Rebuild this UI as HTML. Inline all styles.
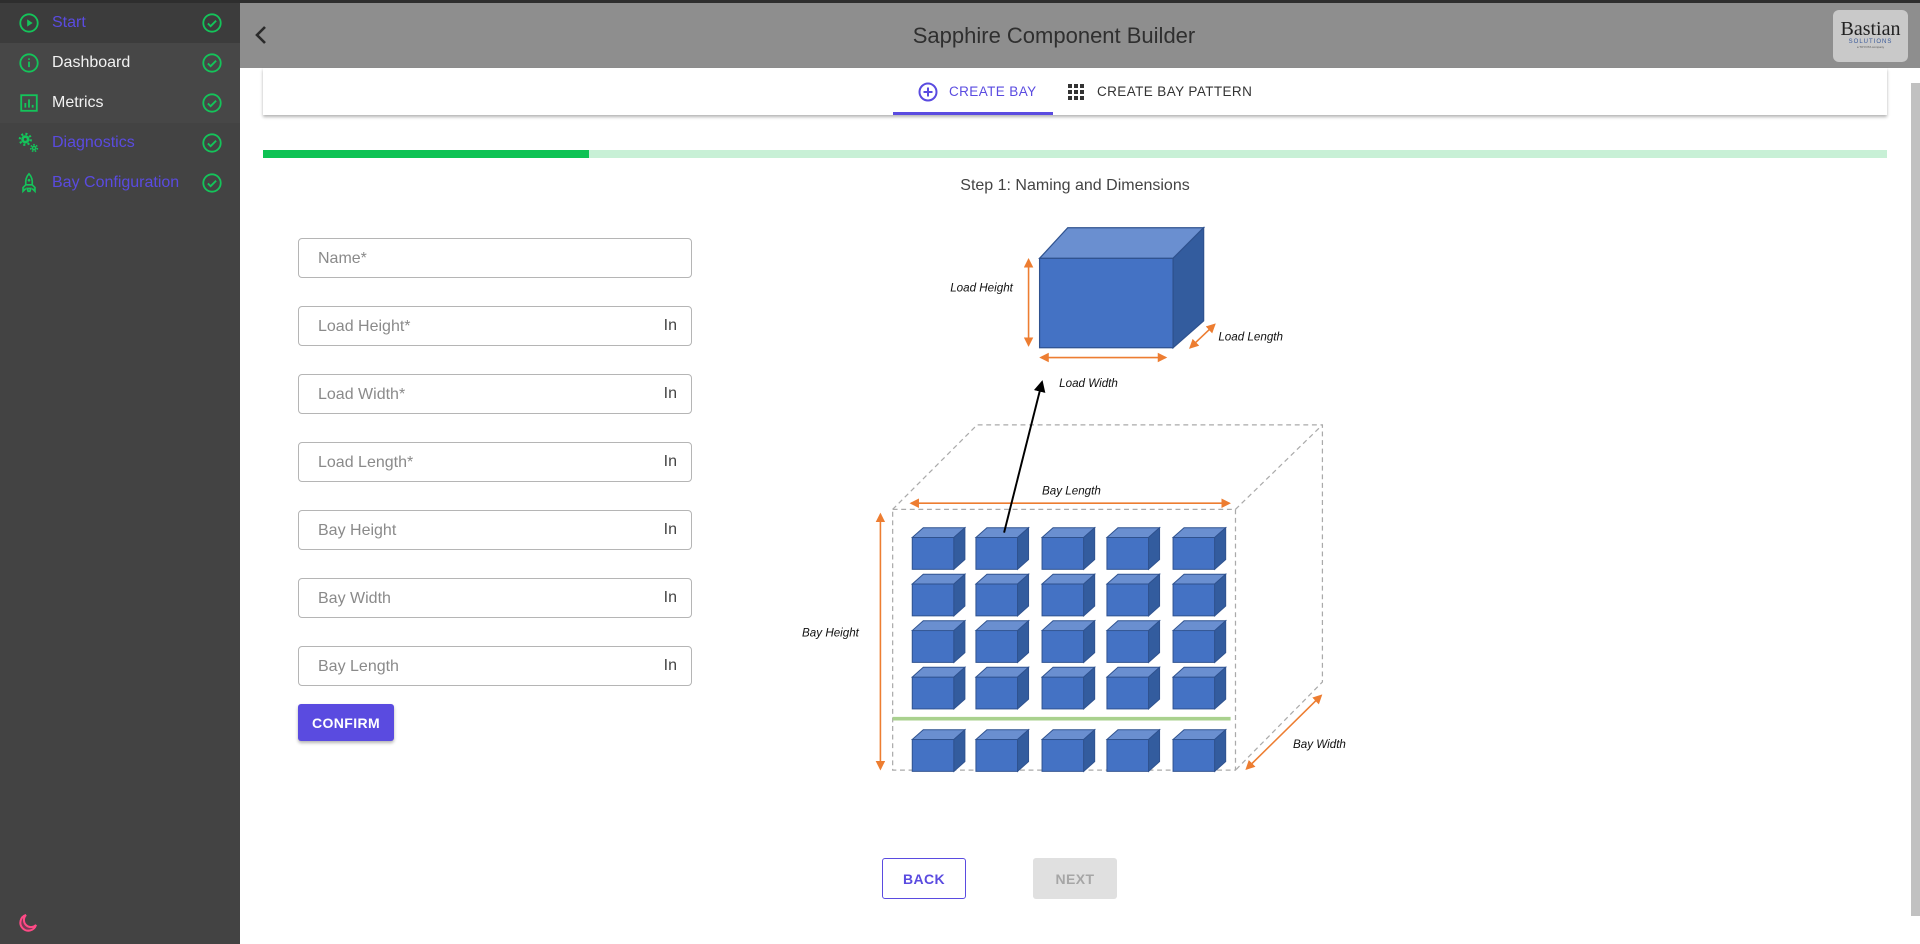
<!DOCTYPE html>
<html><head><meta charset="utf-8"><style>
*{margin:0;padding:0;box-sizing:border-box}
body{width:1920px;height:944px;overflow:hidden;background:#fff;font-family:"Liberation Sans",Roboto,sans-serif;position:relative}
.topline{position:absolute;left:0;top:0;width:1920px;height:3px;background:#2e2e2e}
.side{position:absolute;left:0;top:3px;width:240px;height:941px;background:#434343}
.item{position:absolute;left:0;width:240px;height:40px;display:flex;align-items:center}
.item .lbl{position:absolute;left:52px;font-size:16px}
.item svg.ic{position:absolute;left:18px}
.item svg.ck{position:absolute;left:201px}
.hdr{position:absolute;left:240px;top:3px;width:1680px;height:65px;background:#8e8e8e}
.title{position:absolute;left:0;width:100%;top:20px;text-align:center;font-size:22px;color:#2f2f2f;padding-right:52px}
.card{position:absolute;left:263px;top:68px;width:1624px;height:47px;background:#fff;box-shadow:0 2px 3px rgba(0,0,0,.3)}
.tab{position:absolute;top:0;height:47px;font-size:13.5px;letter-spacing:.4px;display:flex;align-items:center}
.prog{position:absolute;left:263px;top:150px;width:1624px;height:8px;background:#c8f0d6}
.prog div{width:326px;height:8px;background:#0ec254}
.inp{position:absolute;left:298px;width:394px;height:40px;border:1px solid #b5b5b5;border-radius:4px;font-size:16px;color:#8a8a8a}
.inp span{position:absolute;left:19px;top:11px}
.inp b{position:absolute;right:14px;top:10px;font-weight:normal;color:#444;font-size:16px}
.btn{position:absolute;font-size:14px;font-weight:bold;display:flex;align-items:center;justify-content:center;border-radius:3px;letter-spacing:.4px}
</style></head><body>
<div class="topline"></div>
<div class="side">
 <div class="item" style="top:0;background:#3c3c3c"><svg class="ic" width="22" height="22" viewBox="0 0 24 24"><circle cx="12" cy="12" r="9.5" fill="none" stroke="#14c45a" stroke-width="2"/><path d="M10 8l6 4-6 4z" fill="#14c45a"/></svg><span class="lbl" style="color:#5a4be0">Start</span><svg class="ck" width="22" height="22" viewBox="0 0 24 24"><circle cx="12" cy="12" r="9.5" fill="none" stroke="#14c45a" stroke-width="2"/><path d="M7.5 12.5l3 3 6-6" fill="none" stroke="#14c45a" stroke-width="2"/></svg></div>
 <div class="item" style="top:40px;background:#474747"><svg class="ic" width="22" height="22" viewBox="0 0 24 24"><circle cx="12" cy="12" r="9.5" fill="none" stroke="#14c45a" stroke-width="2"/><path d="M12 10.5v6M12 7v1.6" stroke="#14c45a" stroke-width="2"/></svg><span class="lbl" style="color:#f2f2f2">Dashboard</span><svg class="ck" width="22" height="22" viewBox="0 0 24 24"><circle cx="12" cy="12" r="9.5" fill="none" stroke="#14c45a" stroke-width="2"/><path d="M7.5 12.5l3 3 6-6" fill="none" stroke="#14c45a" stroke-width="2"/></svg></div>
 <div class="item" style="top:80px;background:#474747"><svg class="ic" width="22" height="22" viewBox="0 0 24 24"><rect x="3.5" y="3.5" width="17" height="17" fill="none" stroke="#14c45a" stroke-width="2"/><path d="M8 17v-5M12 17V8M16 17v-3" stroke="#14c45a" stroke-width="2"/></svg><span class="lbl" style="color:#f2f2f2">Metrics</span><svg class="ck" width="22" height="22" viewBox="0 0 24 24"><circle cx="12" cy="12" r="9.5" fill="none" stroke="#14c45a" stroke-width="2"/><path d="M7.5 12.5l3 3 6-6" fill="none" stroke="#14c45a" stroke-width="2"/></svg></div>
 <div class="item" style="top:120px"><svg class="ic" width="22" height="22" viewBox="0 0 24 24"><circle cx="8" cy="8" r="4.5" fill="#14c45a"/><circle cx="8" cy="8" r="6" fill="none" stroke="#14c45a" stroke-width="2.5" stroke-dasharray="2.2 2.5"/><circle cx="8" cy="8" r="1.6" fill="#434343"/><circle cx="17.5" cy="17.5" r="2.6" fill="#14c45a"/><circle cx="17.5" cy="17.5" r="3.6" fill="none" stroke="#14c45a" stroke-width="1.8" stroke-dasharray="1.6 1.6"/><circle cx="17.5" cy="17.5" r="1" fill="#434343"/></svg><span class="lbl" style="color:#5a4be0">Diagnostics</span><svg class="ck" width="22" height="22" viewBox="0 0 24 24"><circle cx="12" cy="12" r="9.5" fill="none" stroke="#14c45a" stroke-width="2"/><path d="M7.5 12.5l3 3 6-6" fill="none" stroke="#14c45a" stroke-width="2"/></svg></div>
 <div class="item" style="top:160px"><svg class="ic" width="22" height="22" viewBox="0 0 24 24"><path d="M12 2c3 3 4 7 3.5 12h-7C8 9 9 5 12 2zM8.5 14l-3 3v4l3-3M15.5 14l3 3v4l-3-3M10 18h4l-1 3h-2z" fill="none" stroke="#14c45a" stroke-width="1.8"/><circle cx="12" cy="9" r="1.5" fill="#14c45a"/></svg><span class="lbl" style="color:#5a4be0">Bay Configuration</span><svg class="ck" width="22" height="22" viewBox="0 0 24 24"><circle cx="12" cy="12" r="9.5" fill="none" stroke="#14c45a" stroke-width="2"/><path d="M7.5 12.5l3 3 6-6" fill="none" stroke="#14c45a" stroke-width="2"/></svg></div>
 <svg style="position:absolute;left:18px;top:910px" width="20" height="20" viewBox="0 0 20 20"><path d="M8 2a8 8 0 1 0 10 10a6 6 0 0 1-10-10z" fill="#7a3a55" stroke="#ff4a86" stroke-width="2"/></svg>
</div>
<div class="hdr">
 <svg style="position:absolute;left:14px;top:22px" width="14" height="20" viewBox="0 0 14 20"><path d="M11 2L3 10l8 8" fill="none" stroke="#2a2a2a" stroke-width="2.6"/></svg>
 <div class="title">Sapphire Component Builder</div>
 <div style="position:absolute;left:1593px;top:7px;width:75px;height:52px;background:#c9c9c9;border-radius:6px;text-align:center">
  <div style="font-family:'Liberation Serif',serif;font-size:20px;color:#222;margin-top:9px;line-height:20px">Bastian</div>
  <div style="font-size:6px;color:#3a5a9a;letter-spacing:1px">SOLUTIONS</div>
  <div style="font-size:3px;color:#555">a TOYOTA company</div>
 </div>
</div>
<div style="position:absolute;left:1911px;top:83px;width:9px;height:833px;background:#c1c1c1"></div>
<div class="card">
 <div class="tab" style="left:630px;width:160px;color:#5a4be0;padding-left:25px"><svg width="20" height="20" viewBox="0 0 20 20" style="margin-right:11px"><circle cx="10" cy="10" r="8.5" fill="none" stroke="#5a4be0" stroke-width="2"/><path d="M10 5.5v9M5.5 10h9" stroke="#5a4be0" stroke-width="2"/></svg>CREATE BAY</div>
 <div style="position:absolute;left:630px;top:44px;width:160px;height:3px;background:#5a4be0"></div>
 <div class="tab" style="left:805px;color:#333"><svg width="16" height="16" viewBox="0 0 16 16" style="margin-right:13px" fill="#333"><rect x="0" y="0" width="4" height="4"/><rect x="6" y="0" width="4" height="4"/><rect x="12" y="0" width="4" height="4"/><rect x="0" y="6" width="4" height="4"/><rect x="6" y="6" width="4" height="4"/><rect x="12" y="6" width="4" height="4"/><rect x="0" y="12" width="4" height="4"/><rect x="6" y="12" width="4" height="4"/><rect x="12" y="12" width="4" height="4"/></svg>CREATE BAY PATTERN</div>
</div>
<div class="prog"><div></div></div>
<div style="position:absolute;left:263px;width:1624px;top:177px;text-align:center;font-size:16px;color:#444">Step 1: Naming and Dimensions</div>
<div class="inp" style="top:238px"><span>Name*</span></div>
<div class="inp" style="top:306px"><span>Load Height*</span><b>In</b></div>
<div class="inp" style="top:374px"><span>Load Width*</span><b>In</b></div>
<div class="inp" style="top:442px"><span>Load Length*</span><b>In</b></div>
<div class="inp" style="top:510px"><span>Bay Height</span><b>In</b></div>
<div class="inp" style="top:578px"><span>Bay Width</span><b>In</b></div>
<div class="inp" style="top:646px"><span>Bay Length</span><b>In</b></div>
<div class="btn" style="left:298px;top:704px;width:96px;height:37px;background:#5a4be0;color:#fff;box-shadow:0 2px 3px rgba(0,0,0,.3)">CONFIRM</div>
<div class="btn" style="left:882px;top:858px;width:84px;height:41px;border:1px solid #5a4be0;color:#5a4be0">BACK</div>
<div class="btn" style="left:1033px;top:858px;width:84px;height:41px;background:#e0e0e0;color:#a6a6a6">NEXT</div>

<svg style="position:absolute;left:0;top:0" width="1920" height="944" viewBox="0 0 1568 771">
<defs>
<marker id="a" markerWidth="6" markerHeight="6" refX="5" refY="3" orient="auto-start-reverse"><path d="M0 0L6 3L0 6z" fill="#ed7d31"/></marker>
<marker id="k" markerWidth="6" markerHeight="6" refX="5" refY="3" orient="auto"><path d="M0 0L6 3L0 6z" fill="#000"/></marker>
<g id="c"><rect x="0" y="0" width="34" height="26" fill="#4472c4" stroke="#2f528f" stroke-width=".8"/><path d="M0 0L9-8H43L34 0z" fill="#6a8fd0" stroke="#2f528f" stroke-width=".8"/><path d="M34 0L43-8V18L34 26z" fill="#335c9e" stroke="#2f528f" stroke-width=".8"/></g>
</defs>
<path d="M849 211L872 186H983L958 211z" fill="#6a8fd0" stroke="#2f528f"/>
<path d="M958 211L983 186V262L958 284z" fill="#335c9e" stroke="#2f528f"/>
<rect x="849" y="211" width="109" height="73" fill="#4472c4" stroke="#2f528f"/>
<line x1="840" y1="212" x2="840" y2="282" stroke="#ed7d31" stroke-width="1.3" marker-start="url(#a)" marker-end="url(#a)"/>
<line x1="850" y1="292" x2="952" y2="292" stroke="#ed7d31" stroke-width="1.3" marker-start="url(#a)" marker-end="url(#a)"/>
<line x1="972" y1="284" x2="992" y2="265" stroke="#ed7d31" stroke-width="1.3" marker-start="url(#a)" marker-end="url(#a)"/>
<g font-family="'Liberation Sans',sans-serif" font-style="italic" font-size="9.5" fill="#111">
<text x="776" y="238">Load Height</text><text x="865" y="316">Load Width</text><text x="995" y="278">Load Length</text>
<text x="851" y="404">Bay Length</text><text x="655" y="520">Bay Height</text><text x="1056" y="611">Bay Width</text></g>
<g fill="none" stroke="#aaa" stroke-dasharray="4 3" stroke-width="1">
<rect x="729" y="416" width="280" height="213"/>
<path d="M729 416L798 347H1080V557L1009 629M1009 416L1080 347"/>
</g>
<line x1="744" y1="411" x2="1004" y2="411" stroke="#ed7d31" stroke-width="1.3" marker-start="url(#a)" marker-end="url(#a)"/>
<line x1="719" y1="420" x2="719" y2="628" stroke="#ed7d31" stroke-width="1.3" marker-start="url(#a)" marker-end="url(#a)"/>
<line x1="1018" y1="628" x2="1079" y2="568" stroke="#ed7d31" stroke-width="1.3" marker-start="url(#a)" marker-end="url(#a)"/>
<line x1="729" y1="587" x2="1005" y2="587" stroke="#a9d18e" stroke-width="3"/>
<g>
<use href="#c" x="745" y="439"/><use href="#c" x="797" y="439"/><use href="#c" x="851" y="439"/><use href="#c" x="904" y="439"/><use href="#c" x="958" y="439"/>
<use href="#c" x="745" y="477"/><use href="#c" x="797" y="477"/><use href="#c" x="851" y="477"/><use href="#c" x="904" y="477"/><use href="#c" x="958" y="477"/>
<use href="#c" x="745" y="515"/><use href="#c" x="797" y="515"/><use href="#c" x="851" y="515"/><use href="#c" x="904" y="515"/><use href="#c" x="958" y="515"/>
<use href="#c" x="745" y="553"/><use href="#c" x="797" y="553"/><use href="#c" x="851" y="553"/><use href="#c" x="904" y="553"/><use href="#c" x="958" y="553"/>
<use href="#c" x="745" y="604"/><use href="#c" x="797" y="604"/><use href="#c" x="851" y="604"/><use href="#c" x="904" y="604"/><use href="#c" x="958" y="604"/>
</g>
<line x1="820" y1="435" x2="851" y2="312" stroke="#000" stroke-width="1.6" marker-end="url(#k)"/>
</svg>
</body></html>
